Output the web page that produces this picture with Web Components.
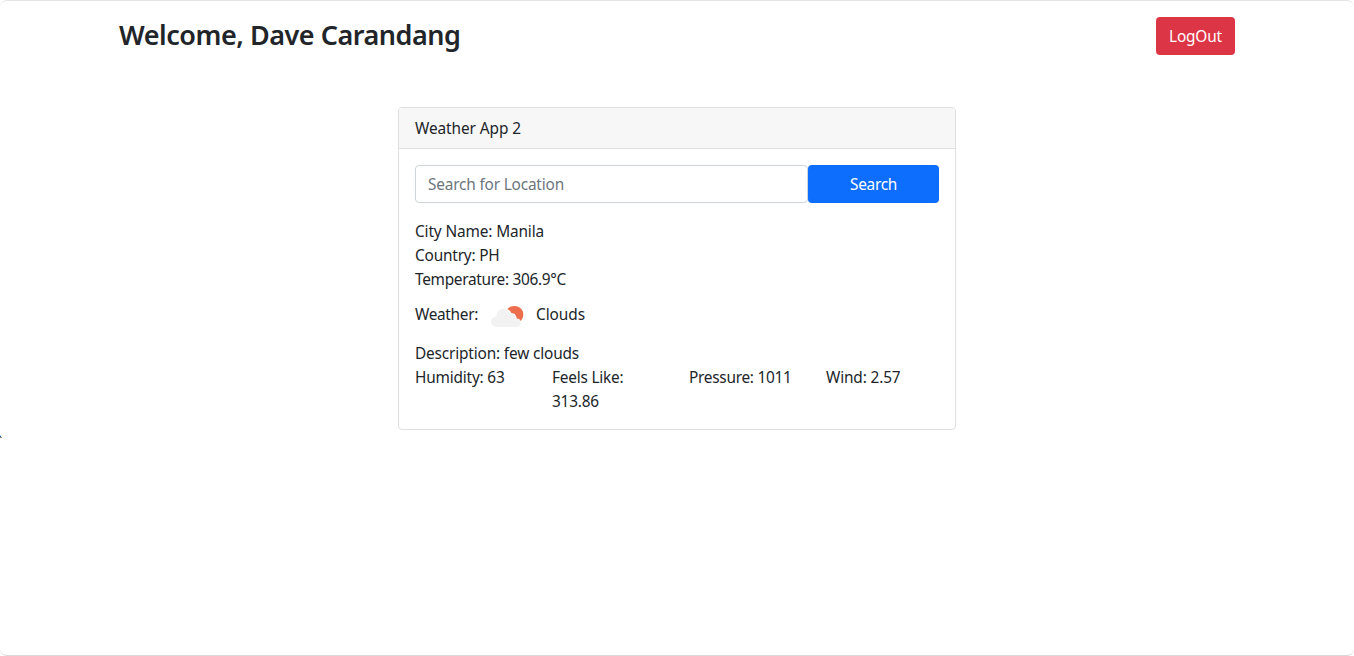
<!DOCTYPE html>
<html lang="en">
<head>
<meta charset="utf-8">
<title>Weather App 2</title>
<style>
  body { margin: 0; background: #fff; color: #212529; font: 15.4px/24px "Noto Sans", "Open Sans", sans-serif; }
</style>
</head>
<body>
<weather-page></weather-page>
<script>
const define = (name, html, setup) => customElements.define(name, class extends HTMLElement {
  constructor() {
    super();
    this.attachShadow({ mode: 'open' }).innerHTML = html;
  }
  connectedCallback() { if (setup) setup(this); }
});

// A run of text tracked so that it spans the width given in its "w" attribute.
define('fit-text', `<style>:host{display:block;white-space:nowrap;padding-top:var(--drop,1px);margin-bottom:calc(-1*var(--drop,1px))}span{display:inline-block;vertical-align:top}</style><span><slot></slot></span>`, el => {
  const width = parseFloat(el.getAttribute('w'));
  const span = el.shadowRoot.querySelector('span');
  const natural = span.getBoundingClientRect().width;
  if (natural) span.style.letterSpacing = ((width - natural) / el.textContent.length) + 'px';
  el.style.width = width + 'px';
});

define('app-button', `<style>
  :host{display:block;box-sizing:border-box;height:38px;border-radius:4px;background:var(--bg,#0d6efd)}
  button{all:unset;box-sizing:border-box;width:100%;height:38px;padding:7px 12px;color:#fff;cursor:pointer;display:flex;justify-content:center;align-items:flex-start;line-height:24px}
</style><button type="button"><slot></slot></button>`);

define('page-header', `<style>
  :host{display:flex;justify-content:space-between;align-items:flex-start;width:1116px;margin:0 auto;padding-top:16px}
  h3{--drop:0px;margin:1px 0 0;font-size:27px;line-height:34px;font-weight:580}
  app-button{--bg:#dc3545;width:79px}
</style>
<h3><fit-text w="341.500">Welcome, Dave Carandang</fit-text></h3>
<app-button><fit-text w="53">LogOut</fit-text></app-button>`);

define('app-card', `<style>
  :host{display:block;box-sizing:border-box;border:1px solid #dfdfdf;border-radius:4px;background:#fff}
  header{height:24px;padding:8px 16px;background:#f7f7f7;border-bottom:1px solid #dfdfdf;border-radius:3px 3px 0 0}
  section{padding:16px}
</style><header><slot name="title"></slot></header><section><slot></slot></section>`);

define('search-bar', `<style>
  :host{display:grid;grid-template-columns:3fr 1fr;margin-bottom:16px}
  .field{box-sizing:border-box;height:38px;border:1px solid #ced4da;border-radius:4px;padding:6px 12px;color:#6c757d}
</style>
<div class="field"><fit-text w="136">Search for Location</fit-text></div>
<app-button><fit-text w="47">Search</fit-text></app-button>`);

define('cloud-icon', `<style>:host{display:block;width:50px;height:50px}svg{display:block}</style>
<svg width="50" height="50" viewBox="6 -12 150 150">
  <path fill="#ec6e4c" d="M82 42C87 36 95 33 104 33C119 33 130 44 130 58C130 66 127 73 122 78L118 73L110 71C110 65 107 59 103 56L94 54C91 49 88 45 82 42Z"/>
  <path fill="#f2f2f2" d="M49 96C40 96 33 89 33 80.500C33 72 40 65 49 65C49 52 57 42 69 42C79 42 86 48 88 56C98 53 107 61 107 71C116 69 122 76 122 83C122 91 116 96 108 96Z"/>
</svg>`);

define('weather-report', `<style>
  :host{display:block}
  .now{display:flex;height:50px;gap:4px}
  .now fit-text{margin-top:11px}
  .stats{display:grid;grid-template-columns:repeat(4,113px);column-gap:24px}
  .stats div{display:flex;flex-direction:column}
  .line{height:24px}
</style>
<div class="line"><fit-text w="129">City Name: Manila</fit-text></div>
<div class="line"><fit-text w="84.500">Country: PH</fit-text></div>
<div class="line"><fit-text w="151">Temperature: 306.9°C</fit-text></div>
<div class="now"><fit-text w="63">Weather:</fit-text><cloud-icon></cloud-icon><fit-text w="49">Clouds</fit-text></div>
<div class="line"><fit-text w="164">Description: few clouds</fit-text></div>
<div class="stats">
  <div><fit-text w="89.500">Humidity: 63</fit-text></div>
  <div><fit-text w="71.500">Feels Like:</fit-text><fit-text w="47">313.86</fit-text></div>
  <div><fit-text w="102.500">Pressure: 1011</fit-text></div>
  <div><fit-text w="74.500">Wind: 2.57</fit-text></div>
</div>`);

define('weather-page', `<style>
  :host{display:block;box-sizing:border-box;height:656px;position:relative;overflow:hidden;border-top:1px solid #e5e5e5;border-bottom:1px solid #d9d9d9;border-radius:7px}
  app-card{width:558px;margin:52px auto 0}
  .mark{position:absolute;left:0;top:434px}
</style>
<page-header></page-header>
<app-card><fit-text slot="title" w="106">Weather App 2</fit-text><search-bar></search-bar><weather-report></weather-report></app-card>
<svg class="mark" width="2" height="3"><path fill="#a8d8ff" d="M0 0h1v1H0z"/><path fill="#1458b8" d="M0 1h1v1H0z"/><path fill="#a08878" d="M0 2h2v1H0z"/></svg>`);
</script>
</body>
</html>
